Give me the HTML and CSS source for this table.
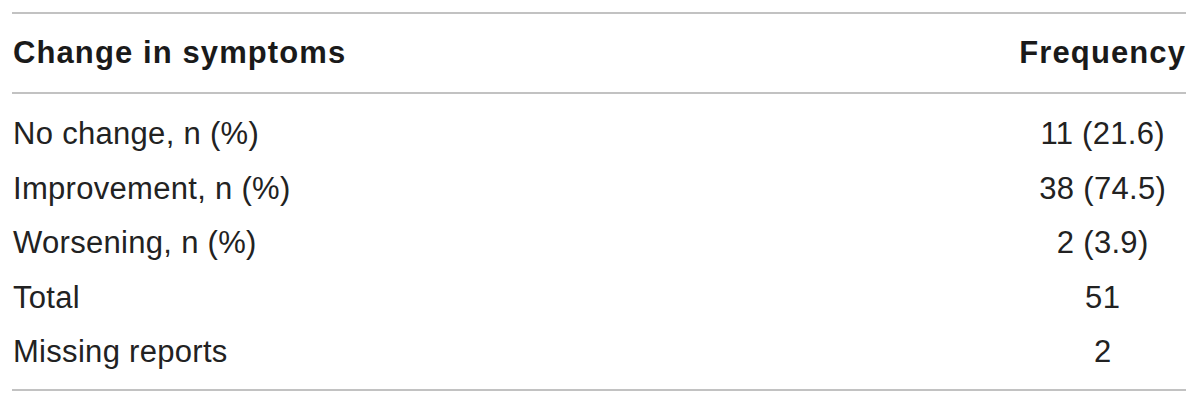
FILE: index.html
```html
<!DOCTYPE html>
<html lang="en">
<head>
  <meta charset="UTF-8">
  <title>Change in symptoms</title>
  <link rel="stylesheet" href="styles.css">
</head>
<body>
  <table class="results">
    <thead>
      <tr>
        <th class="label">Change in symptoms</th>
        <th class="value">Frequency</th>
      </tr>
    </thead>
    <tbody>
      <tr>
        <td class="label">No change, n (%)</td>
        <td class="value">11 (21.6)</td>
      </tr>
      <tr>
        <td class="label">Improvement, n (%)</td>
        <td class="value">38 (74.5)</td>
      </tr>
      <tr>
        <td class="label">Worsening, n (%)</td>
        <td class="value">2 (3.9)</td>
      </tr>
      <tr>
        <td class="label">Total</td>
        <td class="value">51</td>
      </tr>
      <tr>
        <td class="label">Missing reports</td>
        <td class="value">2</td>
      </tr>
    </tbody>
  </table>
</body>
</html>
```

FILE: styles.css
```css
:root {
  --rule: #c2c2c2;
  --text: #222222;
  --head: #1a1a1a;
}

body {
  margin: 0;
  background: #ffffff;
  font-family: "Liberation Sans", Arial, sans-serif;
  color: var(--text);
}

.results {
  margin: 12px;
  width: calc(100% - 26px);
  border-collapse: collapse;
  border-top: 2px solid var(--rule);
  border-bottom: 2px solid var(--rule);
}

.results th {
  font-size: 31px;
  font-weight: bold;
  letter-spacing: 1.1px;
  color: var(--head);
  line-height: 78px;
  padding: 0;
  border-bottom: 2px solid var(--rule);
}

.results td {
  font-size: 31px;
  letter-spacing: 0.3px;
  line-height: 54.5px;
  padding: 0;
}

.results tbody tr:first-child td {
  padding-top: 13px;
}

.results tbody tr:last-child td {
  padding-bottom: 9px;
}

.label {
  text-align: left;
  padding-left: 1px !important;
}

.value {
  width: 1%;
  white-space: nowrap;
  text-align: center;
}
```
